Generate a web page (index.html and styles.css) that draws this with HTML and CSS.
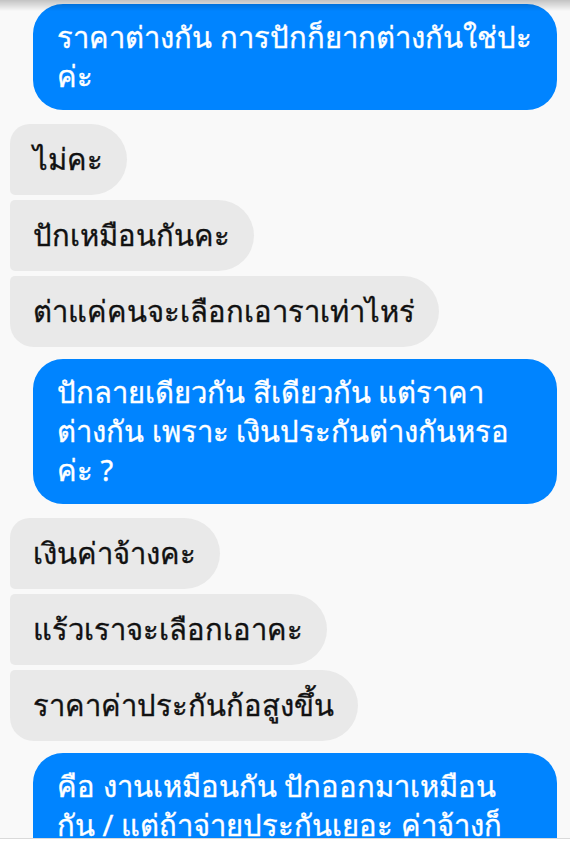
FILE: index.html
```html
<!DOCTYPE html>
<html lang="th">
<head>
    <meta charset="UTF-8">
    <meta name="viewport" content="width=device-width, initial-scale=1">
    <title>แชท</title>
    <link rel="stylesheet" href="styles.css">
</head>
<body>
    <div class="topshadow"></div>
    <div class="chat">
        <div class="msg me">ราคาต่างกัน การปักก็ยากต่างกันใช่ปะ<br>ค่ะ</div>

        <div class="group">
            <div class="msg them first">ไม่คะ</div>
            <div class="msg them">ปักเหมือนกันคะ</div>
            <div class="msg them last">ต่าแค่คนจะเลือกเอาราเท่าไหร่</div>
        </div>

        <div class="msg me">ปักลายเดียวกัน สีเดียวกัน แต่ราคา<br>ต่างกัน เพราะ เงินประกันต่างกันหรอ<br>ค่ะ ?</div>

        <div class="group">
            <div class="msg them first">เงินค่าจ้างคะ</div>
            <div class="msg them">แร้วเราจะเลือกเอาคะ</div>
            <div class="msg them last">ราคาค่าประกันก้อสูงขึ้น</div>
        </div>

        <div class="msg me">คือ งานเหมือนกัน ปักออกมาเหมือน<br>กัน / แต่ถ้าจ่ายประกันเยอะ ค่าจ้างก็<br>สูงขึ้นด้วยใช่ไหมคะ</div>
    </div>
    <div class="inputbar"></div>
</body>
</html>
```

FILE: styles.css
```css
body, html {
    margin: 0;
    height: 100%;
    overflow: hidden;
    background: #f9f9f9;
    font-family: "Noto Sans", Roboto, sans-serif;
}

.topshadow {
    position: fixed;
    top: 0;
    left: 0;
    right: 0;
    height: 11px;
    background: linear-gradient(rgba(0,0,0,0.22), rgba(0,0,0,0));
    z-index: 2;
}

.chat {
    display: flex;
    flex-direction: column;
    padding-top: 4px;
}

.msg {
    font-size: 29.2px;
    line-height: 39px;
    box-sizing: border-box;
    -webkit-text-stroke: 0.35px currentColor;
}

.me {
    align-self: flex-end;
    width: 524px;
    margin-right: 13px;
    margin-top: 12px;
    padding: 14px 24px;
    background: #0084ff;
    color: #fff;
    border-radius: 30px;
}
.chat > .me:first-child {
    margin-top: 0;
}

.group {
    display: flex;
    flex-direction: column;
    align-items: flex-start;
    gap: 5px;
    margin-top: 14px;
    margin-left: 10px;
}

.them {
    padding: 16px 24px 16px 23px;
    background: #e9e9e9;
    color: #111;
    border-radius: 5px 36px 36px 5px;
}
.them.first {
    border-top-left-radius: 20px;
}
.them.last {
    border-bottom-left-radius: 24px;
}

.inputbar {
    position: fixed;
    left: 0;
    right: 0;
    bottom: 0;
    height: 11px;
    background: #fff;
    border-top: 1px solid #dadada;
    z-index: 2;
}
```
